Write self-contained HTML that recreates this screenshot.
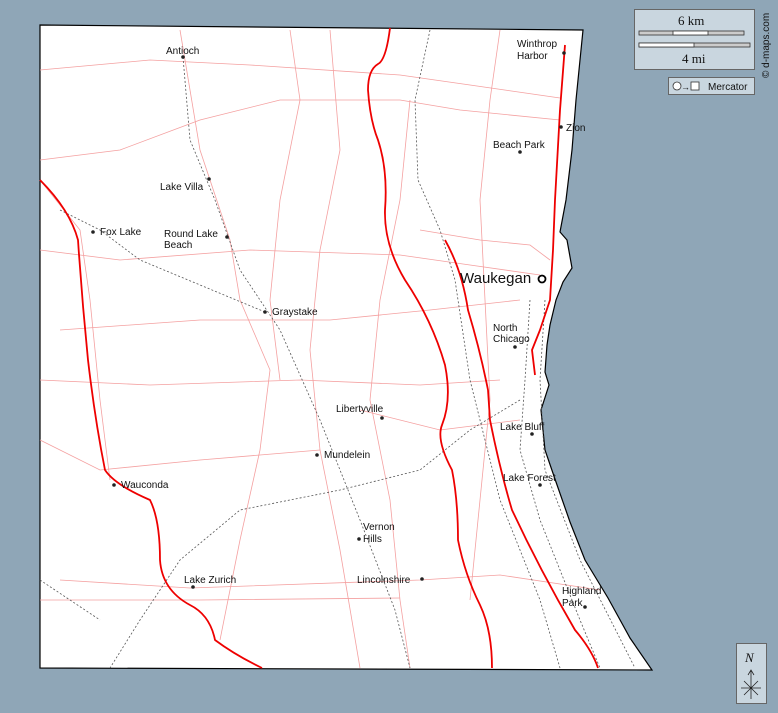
<!DOCTYPE html>
<html><head><meta charset="utf-8"><style>
html,body{margin:0;padding:0;background:#8fa6b7;}
svg{display:block}
text{font-family:"Liberation Sans",sans-serif;font-size:10px;fill:#111}
</style></head><body>
<svg width="778" height="713" viewBox="0 0 778 713">
<rect width="778" height="713" fill="#8fa6b7"/>
<path d="M40,25 L583,30 L580,60 L576,100 L572,150 L566,200 L560,232 L567,240 L572,268 L563,282 L556,300 L550,325 L547,345 L545,372 L549,385 L541,410 L545,450 L556,482 L570,522 L585,560 L608,598 L630,638 L652,670 L40,668 Z" fill="#fff" stroke="#000" stroke-width="1.2"/>
<g fill="none" stroke="#f4a0a0" stroke-width="0.8">
<path d="M40,70 L150,60 L250,65 L400,75 L470,85 L560,98"/>
<path d="M40,160 L120,150 L200,120 L280,100 L400,100 L460,110 L560,120"/>
<path d="M40,180 L80,230 L90,300 L100,400 L110,480"/>
<path d="M40,250 L120,260 L250,250 L400,255 L470,265 L540,275"/>
<path d="M60,330 L200,320 L330,320 L430,310 L520,300"/>
<path d="M40,380 L150,385 L300,380 L420,385 L500,380"/>
<path d="M40,440 L100,470 L200,460 L320,450"/>
<path d="M60,580 L190,588 L420,580 L500,575 L600,590"/>
<path d="M40,600 L200,600 L400,598"/>
<path d="M180,30 L200,150 L230,240 L240,300 L270,370 L260,450 L240,540 L220,640"/>
<path d="M290,30 L300,100 L280,200 L270,300 L280,380"/>
<path d="M330,30 L340,150 L320,250 L310,350 L320,450 L340,550 L360,668"/>
<path d="M410,100 L400,200 L380,300 L370,400 L390,500 L400,600 L410,668"/>
<path d="M500,30 L490,100 L480,200 L485,300 L490,400 L480,500 L470,600"/>
<path d="M360,410 L440,430 L520,420"/>
<path d="M420,230 L480,240 L530,245 L550,260"/>
</g>
<g fill="none" stroke="#555" stroke-width="0.8" stroke-dasharray="2,2">
<path d="M183,57 L190,140 L215,200 L240,270 L280,330 L320,420 L360,520 L395,610 L410,668"/>
<path d="M60,210 L100,230 L140,260 L265,312"/>
<path d="M430,30 L415,100 L418,180 L440,230 L455,280 L470,380 L500,500 L540,600 L560,668"/>
<path d="M520,400 L470,430 L420,470 L340,490 L240,510 L180,560 L140,620 L110,668"/>
<path d="M40,580 L100,620"/>
<path d="M530,300 L525,380 L520,450 L540,520 L580,620 L600,668"/>
<path d="M545,300 L540,380 L545,470 L580,560 L635,668"/>
</g>
<g fill="none" stroke="#e00" stroke-width="1.8" stroke-linejoin="round">
<path d="M390,28 Q386,60 378,64 Q368,70 368,90 Q370,120 378,140 Q388,170 385,210 Q384,245 405,280 Q432,320 445,365 Q452,400 442,425 Q436,440 452,470 Q458,500 458,540 Q465,575 480,605 Q492,630 492,668"/>
<path d="M565,45 L560,110 L555,200 L553,250 L550,300 L540,330 L532,350 L535,375"/>
<path d="M40,180 Q70,210 78,240 Q82,300 88,360 Q95,420 105,470 Q115,485 150,500 Q160,520 160,560 Q162,590 190,605 Q210,615 215,640 Q235,655 262,668"/>
<path d="M445,240 Q462,270 468,310 Q480,350 488,390 L490,420 Q500,470 512,510 Q540,570 575,630 Q592,650 598,668"/>
</g>
<g fill="#222">
<circle cx="183" cy="57" r="1.8"/><circle cx="564" cy="53" r="1.8"/><circle cx="561" cy="127" r="1.8"/>
<circle cx="520" cy="152" r="1.8"/><circle cx="209" cy="179" r="1.8"/><circle cx="93" cy="232" r="1.8"/>
<circle cx="227" cy="237" r="1.8"/><circle cx="265" cy="312" r="1.8"/><circle cx="515" cy="347" r="1.8"/>
<circle cx="382" cy="418" r="1.8"/><circle cx="532" cy="434" r="1.8"/><circle cx="317" cy="455" r="1.8"/>
<circle cx="114" cy="485" r="1.8"/><circle cx="540" cy="485" r="1.8"/><circle cx="359" cy="539" r="1.8"/>
<circle cx="193" cy="587" r="1.8"/><circle cx="422" cy="579" r="1.8"/><circle cx="585" cy="607" r="1.8"/>
</g>
<circle cx="542" cy="279" r="3.5" fill="#fff" stroke="#000" stroke-width="1.8"/>
<text x="166" y="54">Antioch</text>
<text x="517" y="47">Winthrop</text><text x="517" y="59">Harbor</text>
<text x="566" y="131">Zion</text>
<text x="493" y="148">Beach Park</text>
<text x="160" y="190">Lake Villa</text>
<text x="100" y="235">Fox Lake</text>
<text x="164" y="237">Round Lake</text><text x="164" y="248">Beach</text>
<text x="460" y="283" style="font-size:15px">Waukegan</text>
<text x="272" y="315">Graystake</text>
<text x="493" y="331">North</text><text x="493" y="342">Chicago</text>
<text x="336" y="412">Libertyville</text>
<text x="500" y="430">Lake Bluff</text>
<text x="324" y="458">Mundelein</text>
<text x="121" y="488">Wauconda</text>
<text x="503" y="481">Lake Forest</text>
<text x="363" y="530">Vernon</text><text x="363" y="542">Hills</text>
<text x="184" y="583">Lake Zurich</text>
<text x="357" y="583">Lincolnshire</text>
<text x="562" y="594">Highland</text><text x="562" y="606">Park</text>
<rect x="634.5" y="9.5" width="120" height="60" fill="#c9d6df" stroke="#666"/>
<text x="678" y="25" style="font-family:'Liberation Serif',serif;font-size:13px">6 km</text>
<rect x="639" y="31" width="105" height="4" fill="#ccc" stroke="#333" stroke-width="0.8"/>
<rect x="673" y="31" width="35" height="4" fill="#fff" stroke="#333" stroke-width="0.8"/>
<rect x="639" y="43" width="111" height="4" fill="#ccc" stroke="#333" stroke-width="0.8"/>
<rect x="639" y="43" width="55" height="4" fill="#fff" stroke="#333" stroke-width="0.8"/>
<text x="682" y="63" style="font-family:'Liberation Serif',serif;font-size:13px">4 mi</text>
<rect x="668.5" y="77.5" width="86" height="17" fill="#c9d6df" stroke="#666"/>
<circle cx="677" cy="86" r="4" fill="#fff" stroke="#333" stroke-width="0.8"/>
<text x="681" y="90" style="font-size:9px">→</text>
<rect x="691" y="82" width="8" height="8" fill="#fff" stroke="#333" stroke-width="0.8"/>
<text x="708" y="90">Mercator</text>
<text transform="translate(769,78) rotate(-90)" style="font-size:10px">© d-maps.com</text>
<rect x="736.5" y="643.5" width="30" height="60" fill="#c9d6df" stroke="#666"/>
<text x="745" y="662" style="font-family:'Liberation Serif',serif;font-style:italic;font-size:13px">N</text>
<g stroke="#222" stroke-width="0.8" fill="none">
<path d="M751,699 L751,671 M748,675 L751,670 L754,675 M741,688 L761,688 M744,681 L758,695 M758,681 L744,695"/>
</g>
</svg>
</body></html>
